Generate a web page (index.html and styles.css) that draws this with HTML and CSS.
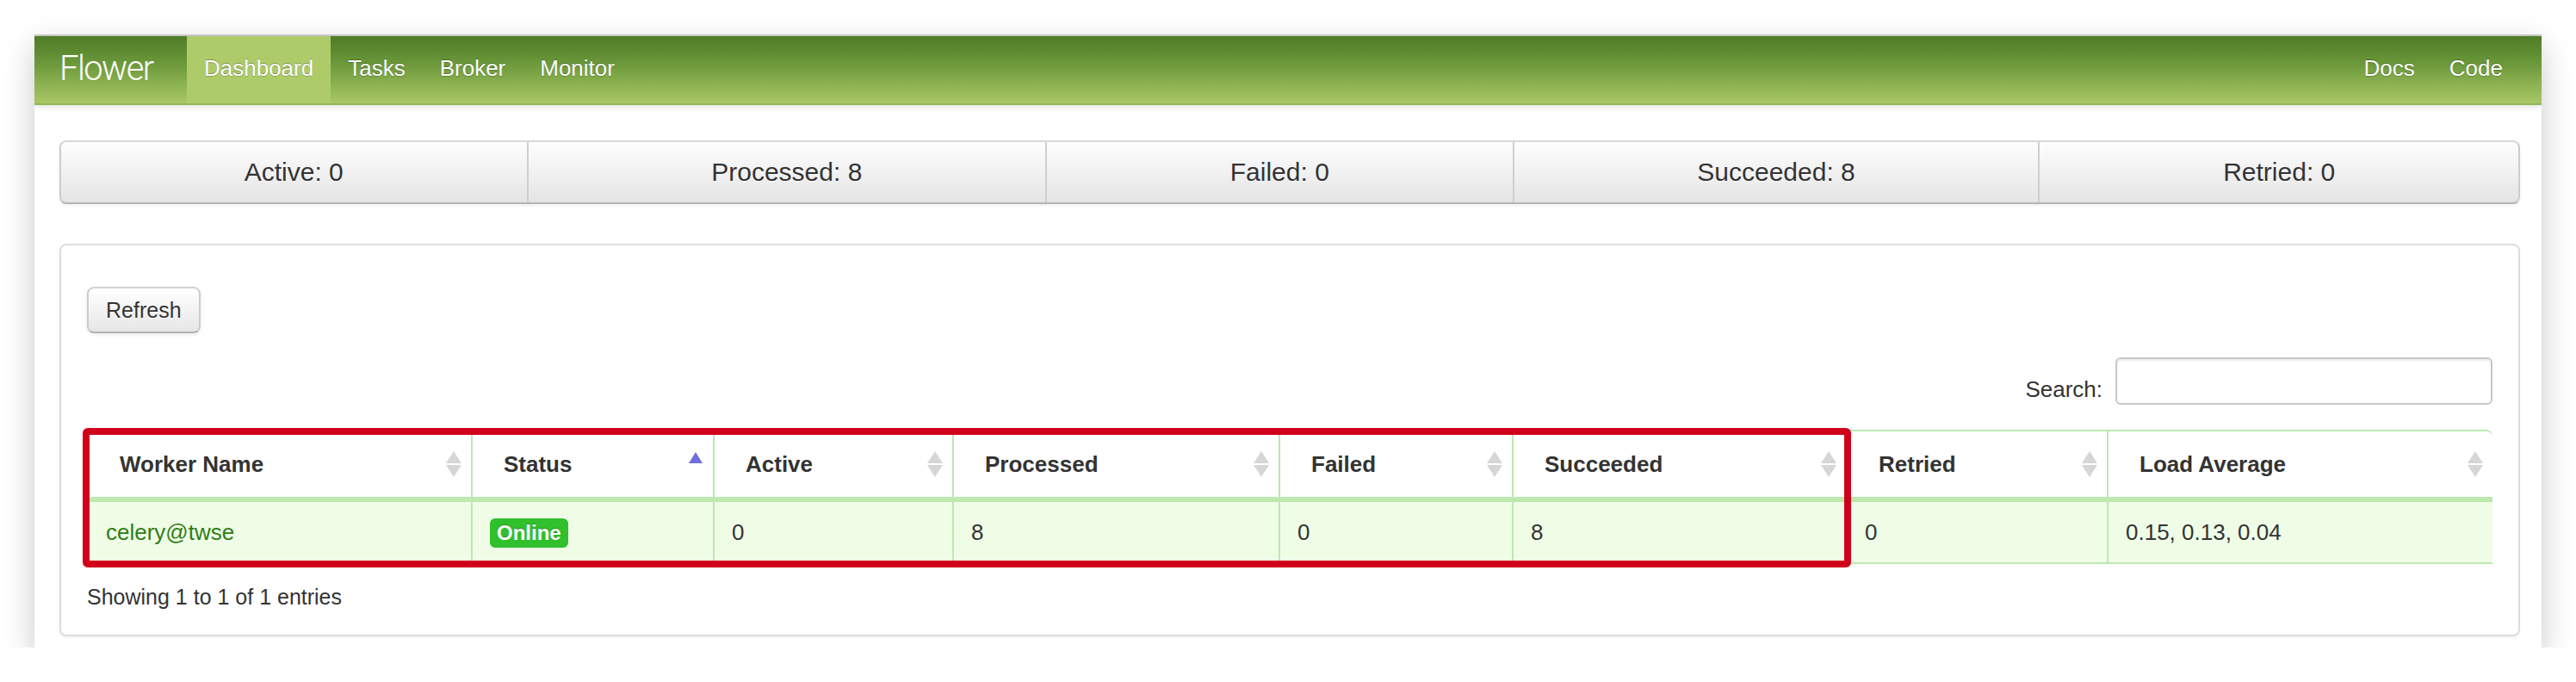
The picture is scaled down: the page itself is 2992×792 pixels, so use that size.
FILE: index.html
```html
<!DOCTYPE html>
<html lang="en">
<head>
<meta charset="utf-8">
<title>Flower</title>
<link rel="stylesheet" href="styles.css">
</head>
<body>
<div class="window">
  <nav class="navbar">
    <a class="brand" href="#">Flower</a>
    <ul class="nav">
      <li class="active"><a href="#">Dashboard</a></li>
      <li><a href="#">Tasks</a></li>
      <li><a href="#">Broker</a></li>
      <li><a href="#">Monitor</a></li>
    </ul>
    <ul class="nav nav-right">
      <li><a href="#">Docs</a></li>
      <li><a href="#">Code</a></li>
    </ul>
  </nav>

  <div class="content">
    <div class="stats">
      <div class="stat">Active: 0</div>
      <div class="stat">Processed: 8</div>
      <div class="stat">Failed: 0</div>
      <div class="stat">Succeeded: 8</div>
      <div class="stat">Retried: 0</div>
    </div>

    <div class="panel">
      <div class="toolbar">
        <button class="btn" type="button">Refresh</button>
      </div>
      <div class="filter">
        <label class="filter-label" for="search">Search:</label>
        <input class="filter-input" id="search" type="text">
      </div>
      <div class="table-wrap">
        <table class="workers">
          <colgroup>
            <col class="w-name">
            <col class="w-status">
            <col class="w-active">
            <col class="w-processed">
            <col class="w-failed">
            <col class="w-succeeded">
            <col class="w-retried">
            <col class="w-load">
          </colgroup>
          <thead>
            <tr>
              <th>Worker Name<span class="sort"><svg width="18" height="30" viewBox="0 0 18 30"><polygon points="9,0 18,14 0,14" class="tri"/><polygon points="0,16 18,16 9,30" class="tri"/></svg></span></th>
              <th>Status<span class="sort"><svg width="18" height="30" viewBox="0 0 18 30"><polygon points="9,1 17,14 1,14" class="tri-asc"/></svg></span></th>
              <th>Active<span class="sort"><svg width="18" height="30" viewBox="0 0 18 30"><polygon points="9,0 18,14 0,14" class="tri"/><polygon points="0,16 18,16 9,30" class="tri"/></svg></span></th>
              <th>Processed<span class="sort"><svg width="18" height="30" viewBox="0 0 18 30"><polygon points="9,0 18,14 0,14" class="tri"/><polygon points="0,16 18,16 9,30" class="tri"/></svg></span></th>
              <th>Failed<span class="sort"><svg width="18" height="30" viewBox="0 0 18 30"><polygon points="9,0 18,14 0,14" class="tri"/><polygon points="0,16 18,16 9,30" class="tri"/></svg></span></th>
              <th>Succeeded<span class="sort"><svg width="18" height="30" viewBox="0 0 18 30"><polygon points="9,0 18,14 0,14" class="tri"/><polygon points="0,16 18,16 9,30" class="tri"/></svg></span></th>
              <th>Retried<span class="sort"><svg width="18" height="30" viewBox="0 0 18 30"><polygon points="9,0 18,14 0,14" class="tri"/><polygon points="0,16 18,16 9,30" class="tri"/></svg></span></th>
              <th>Load Average<span class="sort"><svg width="18" height="30" viewBox="0 0 18 30"><polygon points="9,0 18,14 0,14" class="tri"/><polygon points="0,16 18,16 9,30" class="tri"/></svg></span></th>
            </tr>
          </thead>
          <tbody>
            <tr>
              <td><a class="worker-link" href="#">celery@twse</a></td>
              <td><span class="label-online">Online</span></td>
              <td>0</td>
              <td>8</td>
              <td>0</td>
              <td>8</td>
              <td>0</td>
              <td>0.15, 0.13, 0.04</td>
            </tr>
          </tbody>
        </table>
        <div class="highlight"></div>
      </div>
      <div class="info">Showing 1 to 1 of 1 entries</div>
    </div>
  </div>
</div>
</body>
</html>
```

FILE: styles.css
```css
* { box-sizing: border-box; }

html, body {
  margin: 0;
  padding: 0;
  background: #ffffff;
}

body {
  font-family: "Liberation Sans", Arial, Helvetica, sans-serif;
  color: #333333;
  font-size: 26px;
  line-height: 36px;
}

.window {
  margin: 40px 0 0 40px;
  width: 2912px;
  height: 712px;
  background: #ffffff;
  border-top: 2px solid #c6c6c6;
  box-shadow: 0 14px 34px rgba(0, 0, 0, 0.22);
  overflow: hidden;
}

/* ---------- navbar ---------- */
.navbar {
  display: flex;
  align-items: stretch;
  height: 80px;
  padding: 0 25px 0 29px;
  background: linear-gradient(to bottom, #4e7b26 0%, #6b983a 40%, #a9c865 100%);
  border-bottom: 2px solid #95b456;
  box-shadow: 0 2px 6px rgba(0, 0, 0, 0.12);
  position: relative;
}

.brand {
  display: block;
  width: 148px;
  font-family: Roboto, "Liberation Sans", sans-serif;
  font-weight: 300;
  font-size: 40px;
  letter-spacing: -1.6px;
  line-height: 76px;
  padding-bottom: 2px;
  color: #ffffff;
  text-decoration: none;
}

.nav {
  display: flex;
  list-style: none;
  margin: 0;
  padding: 0;
}

.nav-right {
  margin-left: auto;
}

.nav li a {
  display: block;
  padding: 17px 20px 21px;
  line-height: 40px;
  font-size: 26px;
  color: #ffffff;
  text-decoration: none;
  text-shadow: 0 -1px 0 rgba(0, 0, 0, 0.3), 0 1px 1px rgba(0, 0, 0, 0.2);
}

.nav li.active a {
  background: #aecb6a;
}

/* ---------- content ---------- */
.content {
  padding: 41px 25px 0 29px;
}

.stats {
  display: flex;
  height: 74px;
  border: 2px solid #cccccc;
  border-color: #d8d8d8 #cccccc #b5b5b5;
  border-radius: 8px;
  background: linear-gradient(to bottom, #fefefe, #e4e4e4);
  box-shadow: 0 2px 4px rgba(0, 0, 0, 0.06);
  overflow: hidden;
}

.stat {
  flex: 1 1 auto;
  text-align: center;
  font-size: 30px;
  line-height: 70px;
  color: #333333;
  text-shadow: 0 1px 1px rgba(255, 255, 255, 0.75);
  border-left: 2px solid #cfcfcf;
}

.stat:first-child {
  border-left: none;
}

.panel {
  margin-top: 46px;
  height: 456px;
  border: 2px solid #dcdcdc;
  border-radius: 8px;
  padding: 48px 30px 27px;
  box-shadow: 0 2px 2px rgba(0, 0, 0, 0.05);
}

.toolbar {
  display: flex;
}

.btn {
  display: block;
  margin: 0;
  font-family: "Liberation Sans", Arial, sans-serif;
  font-size: 25px;
  line-height: 36px;
  padding: 7px 20px;
  color: #333333;
  background: linear-gradient(to bottom, #ffffff, #e6e6e6);
  border: 2px solid #cccccc;
  border-color: #d2d2d2 #cccccc #b3b3b3;
  border-radius: 8px;
  box-shadow: inset 0 2px 0 rgba(255, 255, 255, 0.2), 0 2px 4px rgba(0, 0, 0, 0.08);
  text-shadow: 0 1px 1px rgba(255, 255, 255, 0.75);
}

.filter {
  display: flex;
  justify-content: flex-end;
  align-items: flex-end;
  margin-top: 28px;
}

.filter-label {
  font-size: 26px;
  line-height: 36px;
  margin-right: 15px;
}

.filter-input {
  width: 438px;
  height: 55px;
  margin: 0;
  border: 2px solid #c8c8c8;
  border-radius: 6px;
  background: #ffffff;
  box-shadow: inset 0 2px 2px rgba(0, 0, 0, 0.075);
  font-size: 26px;
  padding: 6px 12px;
}

/* ---------- table ---------- */
.table-wrap {
  position: relative;
  margin-top: 29px;
}

.workers {
  width: 100%;
  table-layout: fixed;
  border-collapse: separate;
  border-spacing: 0;
}

.w-name { width: 446px; }
.w-status { width: 281px; }
.w-active { width: 278px; }
.w-processed { width: 379px; }
.w-failed { width: 271px; }
.w-succeeded { width: 388px; }
.w-retried { width: 303px; }
.w-load { width: 448px; }

.workers th {
  position: relative;
  text-align: left;
  font-weight: bold;
  font-size: 26px;
  line-height: 36px;
  padding: 20px 36px;
  background: #ffffff;
  border-top: 2px solid #bde8ae;
  border-left: 2px solid #bde8ae;
  border-bottom: 6px solid #bde8ae;
  white-space: nowrap;
}

.workers th:last-child {
  border-top-right-radius: 8px;
}

.workers td {
  font-size: 26px;
  line-height: 36px;
  padding: 16px 20px 17px;
  background: #effde7;
  border-left: 2px solid #bde8ae;
  border-bottom: 2px solid #bde8ae;
  white-space: nowrap;
}

.sort {
  position: absolute;
  right: 11px;
  top: 50%;
  transform: translateY(-50%);
  width: 18px;
  height: 30px;
  display: block;
}

.sort svg {
  display: block;
}

.tri { fill: #d6d6d6; }
.tri-asc { fill: #6f6fd9; }

.worker-link {
  color: #2f7d14;
  text-decoration: none;
}

.label-online {
  display: inline-block;
  font-size: 24px;
  font-weight: bold;
  line-height: 26px;
  padding: 4px 8px;
  color: #ffffff;
  background: #2fc02b;
  border-radius: 6px;
  text-shadow: 0 -1px 0 rgba(0, 0, 0, 0.25);
  vertical-align: middle;
}

.highlight {
  position: absolute;
  left: -5px;
  top: -2px;
  width: 2054px;
  height: 162px;
  border: 8px solid #d0021b;
  border-radius: 6px;
  pointer-events: none;
}

.info {
  margin-top: 20px;
  font-size: 25px;
  line-height: 36px;
  color: #333333;
}
```
